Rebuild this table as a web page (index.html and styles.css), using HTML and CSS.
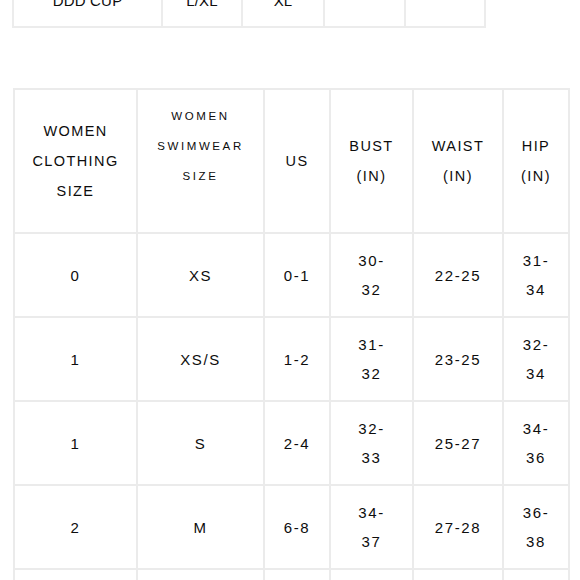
FILE: index.html
```html
<!DOCTYPE html>
<html>
<head>
<meta charset="utf-8">
<link rel="stylesheet" href="styles.css">
</head>
<body>
<div class="page">
  <table class="cup-table">
    <colgroup>
      <col class="c1"><col class="c2"><col class="c3"><col class="c4"><col class="c5">
    </colgroup>
    <tr>
      <td>DDD CUP</td><td>L/XL</td><td>XL</td><td></td><td></td>
    </tr>
  </table>

  <table class="size-table">
    <colgroup>
      <col class="w1"><col class="w2"><col class="w3"><col class="w4"><col class="w5"><col class="w6">
    </colgroup>
    <thead>
      <tr>
        <th>WOMEN<br>CLOTHING<br>SIZE</th>
        <th class="small">WOMEN<br>SWIMWEAR<br>SIZE<br>&nbsp;</th>
        <th>US</th>
        <th>BUST<br>(IN)</th>
        <th>WAIST<br>(IN)</th>
        <th>HIP<br>(IN)</th>
      </tr>
    </thead>
    <tbody>
      <tr><td>0</td><td>XS</td><td>0-1</td><td>30-<br>32</td><td>22-25</td><td>31-<br>34</td></tr>
      <tr><td>1</td><td>XS/S</td><td>1-2</td><td>31-<br>32</td><td>23-25</td><td>32-<br>34</td></tr>
      <tr><td>1</td><td>S</td><td>2-4</td><td>32-<br>33</td><td>25-27</td><td>34-<br>36</td></tr>
      <tr><td>2</td><td>M</td><td>6-8</td><td>34-<br>37</td><td>27-28</td><td>36-<br>38</td></tr>
      <tr><td>3</td><td>M/L</td><td>8-10</td><td>36-<br>38</td><td>28-30</td><td>38-<br>40</td></tr>
    </tbody>
  </table>
</div>
</body>
</html>
```

FILE: styles.css
```css
html, body {
  margin: 0;
  padding: 0;
  background: #ffffff;
}

body {
  font-family: "Liberation Sans", Arial, sans-serif;
  color: #0d0d0d;
  overflow: hidden;
}

.page {
  padding-left: 12px;
  margin-top: -26px;
}

table {
  border-collapse: collapse;
  table-layout: fixed;
}

.cup-table {
  width: 472px;
}

.cup-table .c1 { width: 149px; }
.cup-table .c2 { width: 80px; }
.cup-table .c3 { width: 82px; }
.cup-table .c4 { width: 81px; }
.cup-table .c5 { width: 80px; }

.cup-table td {
  height: 52px;
  padding: 0;
  text-align: center;
  vertical-align: middle;
  font-size: 15px;
  letter-spacing: 0.2px;
  border: 2px solid #ececec;
  border-top: none;
}

.cup-table td + td {
  border-left-color: #dcdcdc;
}

.size-table {
  margin-top: 60px;
  margin-left: 1px;
  width: 555px;
}

.size-table .w1 { width: 123px; }
.size-table .w2 { width: 127px; }
.size-table .w3 { width: 66px; }
.size-table .w4 { width: 83px; }
.size-table .w5 { width: 90px; }
.size-table .w6 { width: 66px; }

.size-table th,
.size-table td {
  padding: 0;
  text-align: center;
  vertical-align: middle;
  border: 2px solid #ebebeb;
  line-height: 30px;
}

.size-table th + th,
.size-table td + td {
  border-left-color: #d9d9d9;
}

.size-table th {
  height: 142px;
  font-weight: normal;
  font-size: 14.5px;
  letter-spacing: 1.4px;
}

.size-table th.small {
  font-size: 11.5px;
  letter-spacing: 2.6px;
}

.size-table td {
  height: 82px;
  font-size: 15px;
  letter-spacing: 1.6px;
  line-height: 29px;
}
```
